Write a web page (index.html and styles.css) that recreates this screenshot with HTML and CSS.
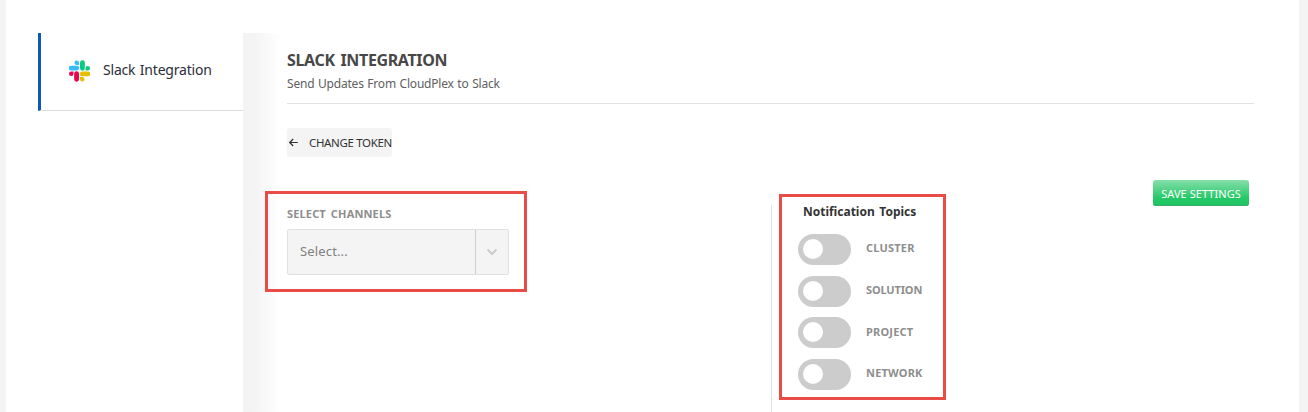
FILE: index.html
```html
<!DOCTYPE html>
<html lang="en">
<head>
<meta charset="utf-8">
<title>Slack Integration</title>
<link rel="stylesheet" href="styles.css">
</head>
<body>
<div class="panel">
  <nav class="sidebar">
    <a class="nav-item">
      <svg class="slack-logo" viewBox="0 0 122 122">
        <path fill="#e8024f" d="M26 77a13 13 0 1 1-13-13h13zM30 77a14 14 0 0 1 28 0v32a14 14 0 0 1-28 0z"/>
        <path fill="#36bdf5" d="M45 26a13 13 0 1 1 13-13v13zM45 30a14 14 0 0 1 0 28H13a14 14 0 0 1 0-28z"/>
        <path fill="#06ca80" d="M96 45a13 13 0 1 1 13 13H96zM92 45a14 14 0 0 1-28 0V13a14 14 0 0 1 28 0z"/>
        <path fill="#e9bd00" d="M77 96a13 13 0 1 1-13 13V96zM77 92a14 14 0 0 1 0-28h32a14 14 0 0 1 0 28z"/>
      </svg>
      <span class="nav-label">Slack Integration</span>
    </a>
  </nav>
  <div class="shade"></div>
  <main class="content">
    <header class="heading">
      <h1 class="title">SLACK INTEGRATION</h1>
      <p class="subtitle">Send Updates From CloudPlex to Slack</p>
    </header>
    <button class="token-button">
      <svg class="arrow" viewBox="0 0 9 9"><path d="M8.8 4.5H.8M4.2 1 .7 4.5 4.2 8"/></svg>
      <span class="token-label">CHANGE TOKEN</span>
    </button>
    <div class="settings">
      <section class="channels">
        <label class="field-label">SELECT CHANNELS</label>
        <div class="select">
          <span class="select-value">Select...</span>
          <span class="select-toggle"><svg class="chevron" viewBox="0 0 12 8"><path d="M1.5 1.5 6 6l4.5-4.5"/></svg></span>
        </div>
        <div class="highlight highlight-channels"></div>
      </section>
      <section class="topics">
        <h2 class="topics-title">Notification Topics</h2>
        <div class="topic"><span class="switch"></span><span class="topic-label cluster">CLUSTER</span></div>
        <div class="topic"><span class="switch"></span><span class="topic-label solution">SOLUTION</span></div>
        <div class="topic"><span class="switch"></span><span class="topic-label project">PROJECT</span></div>
        <div class="topic"><span class="switch"></span><span class="topic-label network">NETWORK</span></div>
        <div class="highlight highlight-topics"></div>
      </section>
      <button class="save-button"><span class="save-label">SAVE SETTINGS</span></button>
    </div>
  </main>
</div>
</body>
</html>
```
FILE: styles.css
```css
* { box-sizing: border-box; }
body {
  margin: 0;
  height: 412px;
  overflow: hidden;
  background: #f4f4f4;
  font-family: "Noto Sans", sans-serif;
}
button { border: 0; padding: 0; font-family: inherit; }
h1, h2, p { margin: 0; }
span, h1, h2, p, label { white-space: nowrap; }
.panel {
  display: flex;
  height: 412px;
  margin: 0 9px 0 6px;
  padding: 33px 45px 0 32px;
  background: #fff;
}
.sidebar { width: 205px; flex: none; }
.nav-item {
  display: flex;
  align-items: center;
  height: 78px;
  padding: 0 0 3px 28px;
  border-left: 3px solid #0c59b8;
  border-bottom: 1px solid #dedede;
}
.slack-logo { width: 21px; height: 22px; margin: 2px 13px 0 0; }
.nav-label { margin-top: -2px; font-size: 14px; letter-spacing: -.2px; word-spacing: 1px; color: #2c2f38; }
.shade {
  width: 44px;
  flex: none;
  background: linear-gradient(90deg, #f3f3f3 0, #f4f4f4 12px, #fff 38px);
}
.content { flex: 1; min-width: 0; }
.heading { height: 71px; padding-top: 16px; border-bottom: 1px solid #e2e2e2; }
.title { font-size: 16px; line-height: 22px; letter-spacing: -.35px; word-spacing: 2px; color: #484848; }
.subtitle { margin-top: 4px; font-size: 12px; line-height: 18px; letter-spacing: -.2px; word-spacing: .7px; color: #606060; }
.token-button {
  display: flex;
  align-items: center;
  width: 105px;
  height: 29px;
  margin-top: 24px;
  padding-left: 2px;
  gap: 11px;
  border-radius: 3px;
  background: #f4f4f4;
  color: #333;
}
.arrow { width: 9px; height: 9px; flex: none; fill: none; stroke: #333; stroke-width: 1.2; }
.token-label { font-size: 11.5px; letter-spacing: -.35px; }
.settings { display: flex; height: 255px; }
.channels { position: relative; width: 484px; padding-top: 49px; }
.field-label { display: block; height: 23px; font-size: 11px; font-weight: 700; line-height: 16px; letter-spacing: .15px; word-spacing: 2px; color: #8e8e8e; }
.select {
  display: flex;
  width: 222px;
  height: 46px;
  border: 1px solid #e0e0e0;
  border-radius: 2px;
  background: #f4f4f4;
}
.select-value { flex: 1; padding-left: 12px; font-size: 13px; line-height: 43px; letter-spacing: .15px; color: #808080; }
.select-toggle { display: flex; width: 34px; align-items: center; justify-content: center; border-left: 1px solid #d0d0d0; width: 33px; }
.chevron { width: 12px; height: 8px; fill: none; stroke: #ccc; stroke-width: 2; }
.topics { position: relative; width: 200px; margin-top: 48px; padding-left: 26px; border-left: 1px solid #e2e2e2; }
.topics-title { height: 29px; padding-left: 5px; font-size: 12px; line-height: 13px; word-spacing: 1.5px; color: #333; }
.topic { display: flex; height: 41.7px; gap: 15px; }
.switch { width: 53px; height: 31px; padding: 5px; border-radius: 16px; background: #ccc; }
.switch::before { content: ""; display: block; width: 20px; height: 20px; border-radius: 50%; background: #fff; }
.topic-label { font-size: 11px; font-weight: 700; line-height: 28px; letter-spacing: .2px; color: #8e8e8e; }
.solution { letter-spacing: -.15px; }
.project { line-height: 29px; }
.save-button {
  width: 96px;
  height: 26px;
  margin: 23px 5px 0 auto;
  border-radius: 3px;
  background: linear-gradient(#86dfab, #24c867 70%, #1fc463);
  box-shadow: inset 0 -1px #39aa68;
  color: #fff;
}
.save-label { font-size: 11px; letter-spacing: .05px; }
.highlight { position: absolute; border: 3px solid #e94b47; }
.highlight-channels { left: -22px; top: 34px; width: 262px; height: 101px; }
.highlight-topics { left: 7px; top: -11px; width: 167px; height: 206px; }
```
